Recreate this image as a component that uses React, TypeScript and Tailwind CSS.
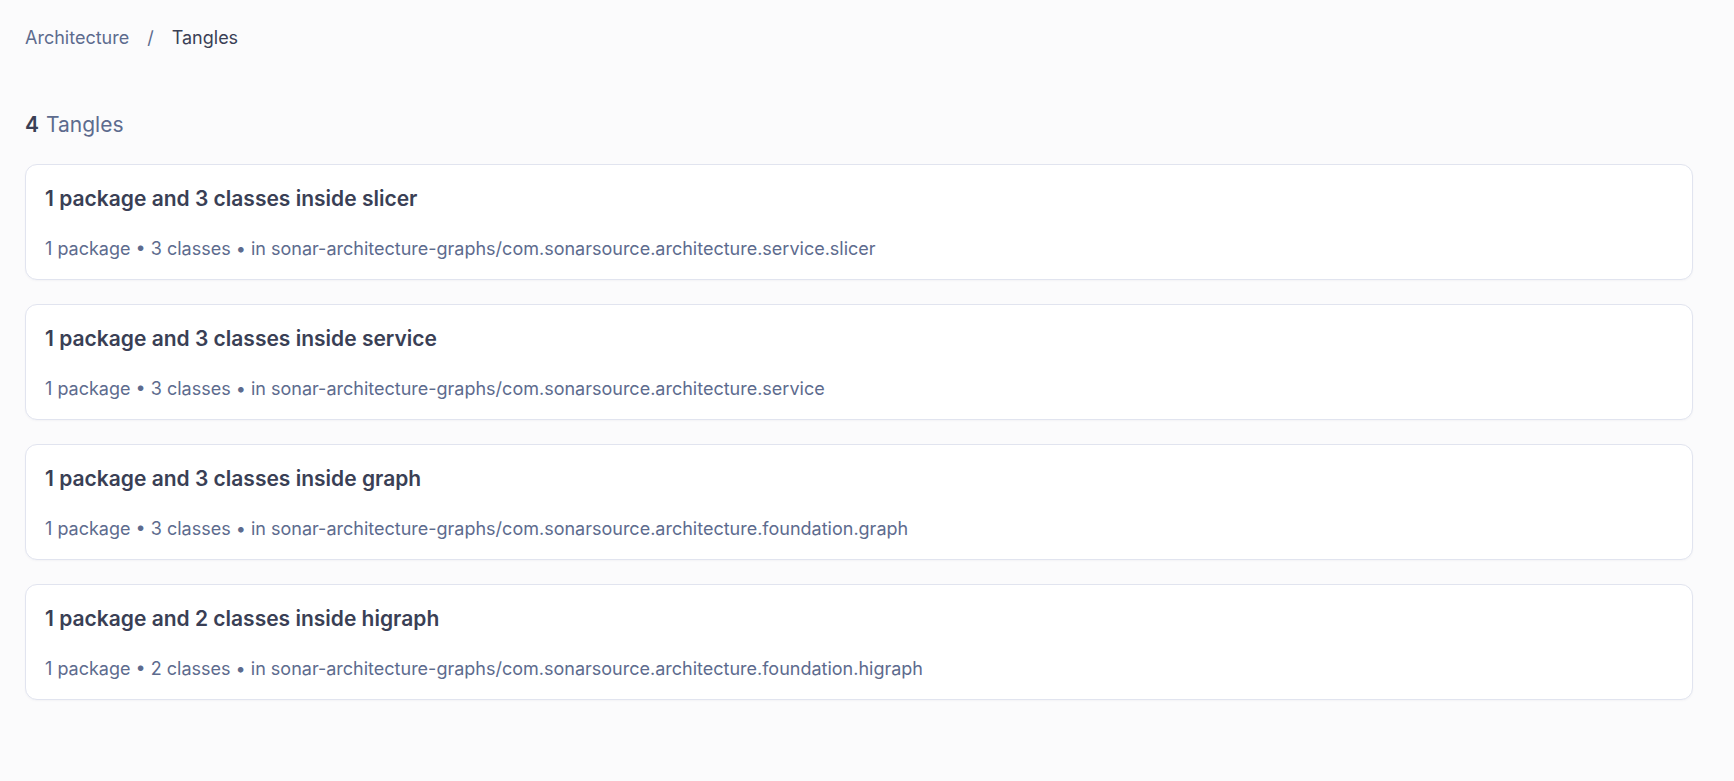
import React from "react";

const tangles = [
  { title: "1 package and 3 classes inside slicer", classes: 3, path: "sonar-architecture-graphs/com.sonarsource.architecture.service.slicer" },
  { title: "1 package and 3 classes inside service", classes: 3, path: "sonar-architecture-graphs/com.sonarsource.architecture.service" },
  { title: "1 package and 3 classes inside graph", classes: 3, path: "sonar-architecture-graphs/com.sonarsource.architecture.foundation.graph" },
  { title: "1 package and 2 classes inside higraph", classes: 2, path: "sonar-architecture-graphs/com.sonarsource.architecture.foundation.higraph" },
];

export default function App() {
  return (
    <div
      className="min-h-[781px] w-full bg-[#fbfbfc] pl-[25px] pr-[41px] pt-[25px]"
      style={{ fontFamily: "Inter, 'Noto Sans', sans-serif" }}
    >
      <nav className="flex items-center text-[18px] leading-[26px]">
        <span className="text-[#5d6b8e]">Architecture</span>
        <span className="mx-[18px] text-[#5d6b8e]">/</span>
        <span className="text-[#3a3f55]">Tangles</span>
      </nav>
      <div className="mt-[59px] text-[21px] leading-[30px]">
        <span className="font-semibold text-[#3a3f55]">4</span>
        <span className="ml-[7px] text-[#5d6b8e]">Tangles</span>
      </div>
      <div className="mt-[24px] flex flex-col gap-6">
        {tangles.map((t) => (
          <div
            key={t.title}
            className="h-[116px] rounded-xl border border-[#e1e4ef] bg-white pl-[19px] pr-5 pt-[19px] shadow-[0_1px_2px_rgba(40,50,90,0.04)]"
          >
            <div className="text-[21px] font-semibold leading-[30px] text-[#3a3f55]">{t.title}</div>
            <div className="mt-[22px] text-[18px] leading-[26px] text-[#5d6b8e]">
              1 package • {t.classes} classes • in {t.path}
            </div>
          </div>
        ))}
      </div>
    </div>
  );
}
